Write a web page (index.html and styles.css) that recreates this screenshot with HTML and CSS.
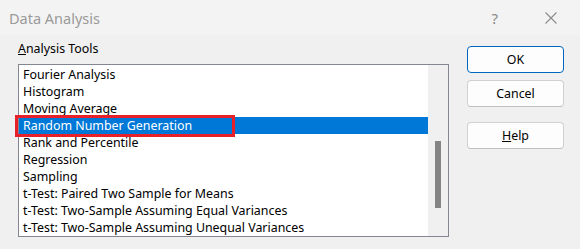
FILE: index.html
```html
<!DOCTYPE html>
<html>
<head>
    <title>Data Analysis</title>
    <link rel="stylesheet" href="styles.css">
</head>
<body>
    <div class="dialog">
        <div class="titlebar">
            <span class="title">Data Analysis</span>
            <span class="help-q">?</span>
            <svg class="close" width="12" height="12" viewBox="0 0 12 12">
                <path d="M0.5 0.5 L11.5 11.5 M11.5 0.5 L0.5 11.5" stroke="#8a8a8a" stroke-width="1.1" fill="none"/>
            </svg>
        </div>

        <div class="content">
            <div class="tools">
                <div class="label"><u>A</u>nalysis Tools</div>
                <div class="listbox">
                    <div class="items">
                        <div class="item">Fourier Analysis</div>
                        <div class="item">Histogram</div>
                        <div class="item">Moving Average</div>
                        <div class="item selected">Random Number Generation</div>
                        <div class="item">Rank and Percentile</div>
                        <div class="item">Regression</div>
                        <div class="item">Sampling</div>
                        <div class="item">t-Test: Paired Two Sample for Means</div>
                        <div class="item">t-Test: Two-Sample Assuming Equal Variances</div>
                        <div class="item">t-Test: Two-Sample Assuming Unequal Variances</div>
                    </div>
                    <div class="scrollbar">
                        <div class="thumb"></div>
                    </div>
                </div>
            </div>

            <div class="buttons">
                <button class="btn default">OK</button>
                <button class="btn">Cancel</button>
                <button class="btn help"><u>H</u>elp</button>
            </div>
        </div>
    </div>
</body>
</html>
```

FILE: styles.css
```css
body {
    margin: 0;
    font-family: "Noto Sans", "Open Sans", sans-serif;
    font-size: 12.4px;
    color: #000;
    background: #f0f0f0;
}
.dialog {
    width: 580px;
    height: 249px;
    background: #f0f0f0;
    overflow: hidden;
}
.titlebar {
    height: 35px;
    background: #f3f3f3;
    display: flex;
    align-items: center;
    padding-left: 9px;
}
.title {
    font-size: 14.5px;
    color: #9a9a9a;
    flex: 1;
}
.help-q {
    font-size: 15px;
    color: #8a8a8a;
    margin-right: 47px;
}
.close {
    margin-right: 23px;
}
.content {
    display: flex;
    padding: 5px 16px 0 18px;
}
.tools {
    width: 431px;
}
.label {
    height: 17px;
    line-height: 18px;
    margin-bottom: 7px;
}
.listbox {
    height: 173px;
    box-sizing: border-box;
    border: 1px solid #828790;
    display: flex;
    background: #fff;
}
.items {
    flex: 1;
    padding-top: 1px;
}
.item {
    height: 17px;
    line-height: 18px;
    padding-left: 4px;
    white-space: nowrap;
}
.item.selected {
    background: #0078d7;
    color: #fff;
    position: relative;
}
.item.selected::after {
    content: "";
    position: absolute;
    left: -4px;
    top: -2px;
    width: 220px;
    height: 22px;
    box-sizing: border-box;
    border: 3px solid #e8202a;
}
.scrollbar {
    width: 20px;
    background: #f0f0f0;
    position: relative;
}
.thumb {
    position: absolute;
    left: 7px;
    top: 76px;
    width: 6px;
    height: 67px;
    background: #858585;
}
.buttons {
    margin-left: 18px;
    padding-top: 6px;
    display: flex;
    flex-direction: column;
}
.btn {
    width: 97px;
    height: 27px;
    box-sizing: border-box;
    border: 1px solid #d0d0d0;
    border-bottom-color: #c0c0c0;
    border-radius: 4px;
    background: #fdfdfd;
    font-family: "Noto Sans", "Open Sans", sans-serif;
    font-size: 12.4px;
    color: #000;
    margin-bottom: 7px;
    padding: 0;
}
.btn.default {
    border-color: #0067c0;
}
.btn.help {
    margin-top: 8px;
}
```
